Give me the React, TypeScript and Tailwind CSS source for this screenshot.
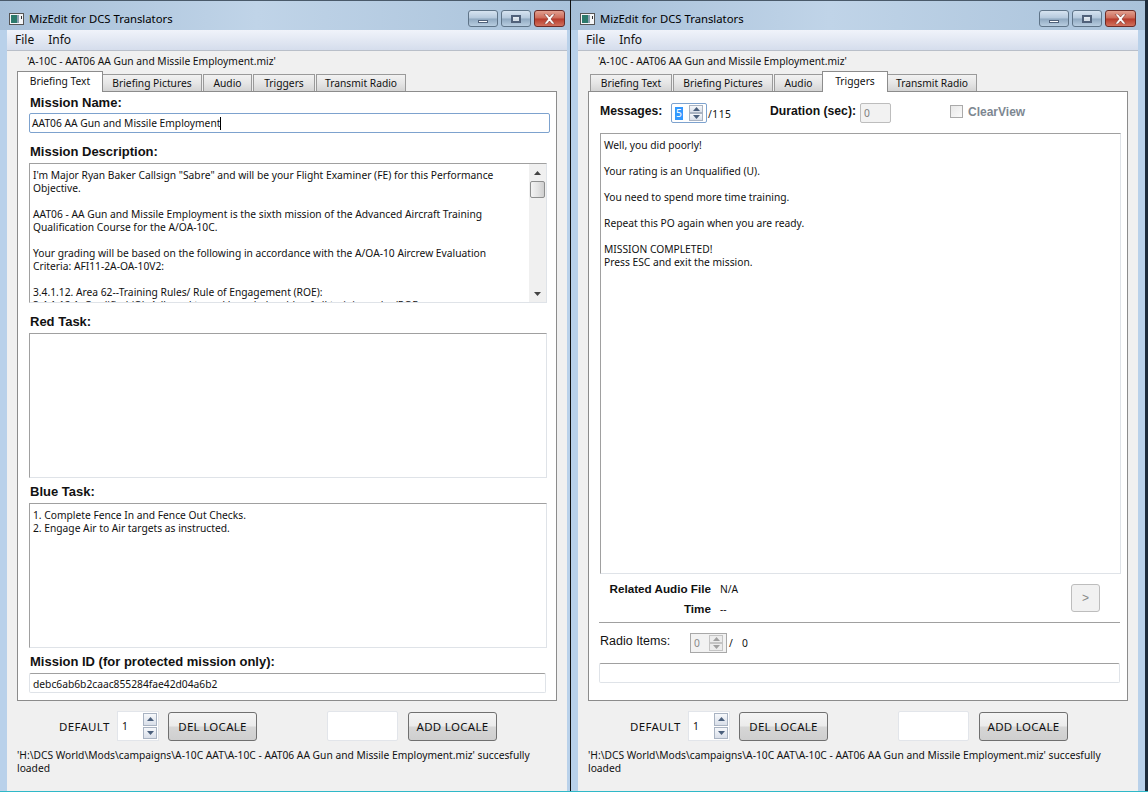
import type { ReactNode } from "react";

const bodyFont = "font-['Noto_Sans',sans-serif] text-[10.25px] leading-[13px] text-[#111]";
const capsFont = "font-['Noto_Sans',sans-serif] text-[11.5px] tracking-[0.3px] leading-[13px] text-[#111]";
const boldLabel = "font-['Liberation_Sans',sans-serif] font-bold text-[13px] leading-[15px] text-[#111] whitespace-nowrap";
const btnFace = "bg-[linear-gradient(#f4f4f4_0%,#ebebeb_48%,#d6d6d6_52%,#cfcfcf_100%)]";

const tabs = [
    { name: "Briefing Text", width: "w-[82px]", activeWidth: "w-[86px]" },
    { name: "Briefing Pictures", width: "w-[100px]", activeWidth: "w-[104px]" },
    { name: "Audio", width: "w-[49px]", activeWidth: "w-[53px]" },
    { name: "Triggers", width: "w-[62px]", activeWidth: "w-[66px]" },
    { name: "Transmit Radio", width: "w-[90px]", activeWidth: "w-[94px]" },
];

const description = [
    'I\'m Major Ryan Baker Callsign "Sabre" and will be your Flight Examiner (FE) for this Performance',
    "Objective.",
    "",
    "AAT06 - AA Gun and Missile Employment is the sixth mission of the Advanced Aircraft Training",
    "Qualification Course for the A/OA-10C.",
    "",
    "Your grading will be based on the following in accordance with the A/OA-10 Aircrew Evaluation",
    "Criteria: AFI11-2A-OA-10V2:",
    "",
    "3.4.1.12. Area 62--Training Rules/ Rule of Engagement (ROE):",
    "3.4.1.12.1. Qualified (Q). Adhered to and knowledgeable of all training rules/ROE.",
];

const triggerText = [
    "Well, you did poorly!",
    "",
    "Your rating is an Unqualified (U).",
    "",
    "You need to spend more time training.",
    "",
    "Repeat this PO again when you are ready.",
    "",
    "MISSION COMPLETED!",
    "Press ESC and exit the mission.",
];

const Lines = ({ lines }: { lines: string[] }) => (
    <>
        {lines.map((line, i) => (
            <div key={i} className="h-[13px] whitespace-nowrap">
                {line}
            </div>
        ))}
    </>
);

const Arrow = ({ up, color = "#4a5f7c" }: { up?: boolean; color?: string }) => (
    <svg width="7" height="4" viewBox="0 0 7 4">
        <path d={up ? "M3.5 0L7 4H0Z" : "M0 0H7L3.5 4Z"} fill={color} />
    </svg>
);

const SpinButtons = ({ disabled, compact }: { disabled?: boolean; compact?: boolean }) => (
    <div className={`flex flex-col ${compact ? "w-[14px] gap-0" : "w-[14px] gap-px"} shrink-0`}>
        {[true, false].map((up) => (
            <div
                key={String(up)}
                className={`flex-1 flex items-center justify-center border ${
                    disabled ? "border-[#c4c4c4] bg-[#ececec]" : "border-[#a9b3c2] bg-[linear-gradient(#f6f8fb,#d9dfe9)]"
                }`}
            >
                <Arrow up={up} color={disabled ? "#a0a0a0" : "#4a5f7c"} />
            </div>
        ))}
    </div>
);

const Field = ({ children, className }: { children?: ReactNode; className: string }) => (
    <div className={`border rounded-[2px] bg-white flex items-center ${bodyFont} ${className}`}>{children}</div>
);

const PushButton = ({ label }: { label: string }) => (
    <div
        className={`w-[89px] h-[29px] border border-[#707070] rounded-[3px] flex items-center justify-center pt-px ${btnFace} ${capsFont}`}
    >
        {label}
    </div>
);

const TitleButtons = () => (
    <div className="flex gap-[3px] pt-[9px]">
        <div className="w-[30px] h-[17px] rounded-[3px] border border-[#5f7488] flex items-center justify-center bg-[linear-gradient(#d6e3f0_0%,#b4c8dc_48%,#8fa8c0_52%,#b8cde0_100%)]">
            <div className="w-[10px] h-[3px] mt-[5px] bg-white border border-[#50617a]" />
        </div>
        <div className="w-[30px] h-[17px] rounded-[3px] border border-[#5f7488] flex items-center justify-center bg-[linear-gradient(#d6e3f0_0%,#b4c8dc_48%,#8fa8c0_52%,#b8cde0_100%)]">
            <div className="w-[10px] h-[8px] bg-white/60 border-2 border-[#50617a]" />
        </div>
        <div className="w-[31px] h-[17px] rounded-[3px] border border-[#6b2b26] flex items-center justify-center bg-[linear-gradient(#e2a08f_0%,#cc6a58_48%,#b63a2a_52%,#d2715d_100%)]">
            <svg width="13" height="10" viewBox="0 0 13 10">
                <path d="M1 0H4L6.5 3L9 0H12L8 5L12 10H9L6.5 7L4 10H1L5 5Z" fill="#fff" stroke="#7a3026" strokeWidth="0.6" />
            </svg>
        </div>
    </div>
);

const AppIcon = () => (
    <svg width="15" height="12" viewBox="0 0 15 12" className="shrink-0">
        <rect x="0.5" y="0.5" width="14" height="11" fill="#f4f6f8" stroke="#555" />
        <rect x="2" y="2" width="6" height="8" fill="#2c7a6c" />
        <rect x="8" y="2" width="2" height="8" fill="#8aa0b0" />
        <rect x="12" y="3" width="1" height="3" fill="#333" />
    </svg>
);

const TabBar = ({ active }: { active: number }) => (
    <div className="flex gap-px h-[20px] items-end relative z-10 pl-[2px]">
        {tabs.map((tab, i) =>
            i === active ? (
                <div
                    key={tab.name}
                    className={`${tab.activeWidth} h-[21px] -mx-[2px] -mb-px relative z-10 bg-white border border-b-0 border-[#8c8c8c] flex items-center justify-center pb-[2px] ${bodyFont}`}
                >
                    {tab.name}
                </div>
            ) : (
                <div
                    key={tab.name}
                    className={`${tab.width} h-[17px] border border-b-0 border-[#9a9a9a] bg-[linear-gradient(#f2f2f2,#e6e6e6_50%,#d4d4d4)] flex items-center justify-center ${bodyFont}`}
                >
                    {tab.name}
                </div>
            )
        )}
    </div>
);

const ScrollBar = () => (
    <div className="w-[17px] h-full shrink-0 bg-[#f0f0f0] flex flex-col items-center">
        <div className="h-[17px] flex items-center justify-center">
            <Arrow up color="#444" />
        </div>
        <div className="w-[15px] h-[17px] border border-[#8e8f8f] rounded-[2px] bg-[linear-gradient(90deg,#f3f3f3,#e4e4e4_50%,#cfcfcf)]" />
        <div className="flex-1" />
        <div className="h-[17px] flex items-center justify-center">
            <Arrow color="#444" />
        </div>
    </div>
);

const TextBox = ({ className, children }: { className: string; children?: ReactNode }) => (
    <div
        className={`border border-[#a0a0a0] border-r-[#dfe3e8] border-b-[#dfe3e8] bg-white overflow-hidden ${bodyFont} ${className}`}
    >
        {children}
    </div>
);

const BriefingPage = () => (
    <div className="pl-[11px] pt-[2px]">
        <div className={`${boldLabel} h-[19px] pl-px pt-px`}>Mission Name:</div>
        <div className="w-[521px] h-[20px] border border-[#7da2ce] rounded-[2px] bg-white pl-[2px] flex items-center">
            <span className={`${bodyFont} mt-px`}>AAT06 AA Gun and Missile Employment</span>
            <span className="w-px h-[13px] bg-black" />
        </div>
        <div className={`${boldLabel} h-[30px] pl-px pt-[11px]`}>Mission Description:</div>
        <TextBox className="w-[518px] h-[140px] flex">
            <div className="flex-1 overflow-hidden pl-[3px] pt-[5px]">
                <Lines lines={description} />
            </div>
            <ScrollBar />
        </TextBox>
        <div className={`${boldLabel} h-[30px] pl-px pt-[11px]`}>Red Task:</div>
        <TextBox className="w-[518px] h-[145px]" />
        <div className={`${boldLabel} h-[25px] pl-px pt-[6px]`}>Blue Task:</div>
        <TextBox className="w-[518px] h-[145px] pl-[3px] pt-[5px]">
            <Lines lines={["1. Complete Fence In and Fence Out Checks.", "2. Engage Air to Air targets as instructed."]} />
        </TextBox>
        <div className={`${boldLabel} h-[25px] pl-px pt-[6px]`}>Mission ID (for protected mission only):</div>
        <Field className="w-[517px] h-[20px] border-[#dfe3e8] border-t-[#a0a0a0] pl-[3px] pt-[2px]">
            debc6ab6b2caac855284fae42d04a6b2
        </Field>
    </div>
);

const TriggersPage = () => (
    <div className="pl-[11px]">
        <div className="h-[41px] flex items-center">
            <span className={`${boldLabel} text-[12.2px]! w-[71px] -mt-[2px]`}>Messages:</span>
            <div className="w-[36px] h-[20px] border border-[#7da2ce] rounded-[2px] bg-white flex items-center justify-between pr-[3px] mt-px">
                <span className={`${bodyFont} ml-[3px] px-px bg-[#3399ff] text-white!`}>5</span>
                <div className="h-[16px] flex">
                    <SpinButtons compact />
                </div>
            </div>
            <span className={`${bodyFont} ml-px w-[62px] tracking-[0.5px] mt-[4px]`}>/115</span>
            <span className={`${boldLabel} text-[12.2px]! w-[90px] -mt-[2px]`}>Duration (sec):</span>
            <Field className="w-[31px] h-[20px] border-[#bdbdbd] bg-[#f2f2f2]! pl-[3px] text-[#808080]! mt-px">0</Field>
            <div className="w-[13px] h-[13px] ml-[59px] border border-[#aaa] bg-[linear-gradient(135deg,#e8e8e8,#fafafa)] -mt-[2px]" />
            <span className="font-['Liberation_Sans',sans-serif] font-bold text-[12px] text-[#7d8791] ml-[5px] -mt-px">ClearView</span>
        </div>
        <TextBox className="w-[521px] h-[441px] pl-[3px] pt-[5px]">
            <Lines lines={triggerText} />
        </TextBox>
        <div className="w-[521px] h-[48px] flex">
            <div className="w-[111px] pt-[8px] flex flex-col gap-[7px] items-end">
                <span className={`${boldLabel} text-[11.7px]! leading-[13px]!`}>Related Audio File</span>
                <span className={`${boldLabel} text-[11.7px]! leading-[13px]!`}>Time</span>
            </div>
            <div className={`pl-[9px] pt-[9px] flex flex-col gap-[7px] ${bodyFont}`}>
                <span>N/A</span>
                <span>--</span>
            </div>
            <div className="ml-auto mr-[21px] mt-[10px] w-[29px] h-[28px] border border-[#bdbdbd] rounded-[3px] bg-[#f1f1f1] flex items-center justify-center text-[#888] font-['Liberation_Sans',sans-serif] text-[12px]">
                &gt;
            </div>
        </div>
        <div className="w-[521px] h-px bg-[#a0a0a0] -ml-px" />
        <div className="h-[40px] flex items-center">
            <span className={`${boldLabel} text-[12.5px]! font-normal! w-[90px] -mt-[3px]`}>Radio Items:</span>
            <div className="w-[37px] h-[20px] border border-[#a8a8a8] bg-[#f2f2f2] flex items-center justify-between pl-[3px] pr-[3px]">
                <span className={`${bodyFont} text-[#8a8a8a]!`}>0</span>
                <div className="h-[16px] flex">
                    <SpinButtons disabled compact />
                </div>
            </div>
            <span className={`${bodyFont} ml-[2px] w-[13px]`}>/</span>
            <span className={bodyFont}>0</span>
        </div>
        <Field className="w-[521px] h-[20px] -ml-px border-[#dfe3e8] border-t-[#a0a0a0]" />
    </div>
);

const Window = ({ page, active, width }: { page: ReactNode; active: number; width: string }) => (
    <div className={`h-[791px] flex flex-col shrink-0 bg-[#b9d1ea] pl-[7px] ${width}`}>
        <div className="h-[30px] -ml-[7px] bg-[linear-gradient(90deg,#a6bfd8,#c0d4e8_45%,#a9c2da)] border-t border-[#4a5a6a]">
            <div className="w-[565px] flex items-start justify-between">
                <div className="flex items-center pl-[9px] pt-[11px] gap-[5px]">
                    <AppIcon />
                    <span className="font-['Noto_Sans',sans-serif] text-[11.3px] leading-[14px] text-black whitespace-nowrap">MizEdit for DCS Translators</span>
                </div>
                <TitleButtons />
            </div>
        </div>
        <div className="w-[560px] h-[21px] bg-[linear-gradient(#f0f3fa,#d5ddec)] border-b border-[#b9bfc9] flex items-center pl-[8px] gap-[14px] font-['Noto_Sans',sans-serif] text-[12px] text-[#111]">
            <span>File</span>
            <span>Info</span>
        </div>
        <div className="flex-1 bg-[#f0f0f0] w-[560px] flex flex-col">
            <div className={`${bodyFont} h-[20px] pl-[20px] pt-[4px]`}>'A-10C - AAT06 AA Gun and Missile Employment.miz'</div>
            <div className="pl-[10px]">
                <TabBar active={active} />
                <div className="w-[540px] h-[610px] border border-[#8c8c8c] bg-white">{page}</div>
            </div>
            <div className="h-[30px] mt-[10px] flex items-center">
                <span className={`${capsFont} w-[110px] pl-[52px] pt-px shrink-0`}>DEFAULT</span>
                <div className="w-[42px] h-[30px] border border-[#e2e5ea] bg-white flex items-center justify-between pl-[4px] pr-[1px] shrink-0">
                    <span className={bodyFont}>1</span>
                    <div className="h-[26px] flex">
                        <SpinButtons />
                    </div>
                </div>
                <div className="ml-[9px] shrink-0">
                    <PushButton label="DEL LOCALE" />
                </div>
                <div className="ml-[70px] w-[71px] h-[30px] border border-[#e2e5ea] rounded-[2px] bg-white shrink-0" />
                <div className="ml-[10px] shrink-0">
                    <PushButton label="ADD LOCALE" />
                </div>
            </div>
            <div className={`${bodyFont} pl-[10px] mt-[8px]`}>
                <Lines lines={["'H:\\DCS World\\Mods\\campaigns\\A-10C AAT\\A-10C - AAT06 AA Gun and Missile Employment.miz' succesfully", "loaded"]} />
            </div>
        </div>
    </div>
);

export default function App() {
    return (
        <div className="w-[1148px] h-[792px] overflow-hidden bg-[#1d2b3a]">
            <div className="flex h-[791px]">
                <div className="w-[570px] shrink-0 overflow-hidden">
                    <Window page={<BriefingPage />} active={0} width="w-[571px]" />
                </div>
                <div className="w-px bg-[#111]" />
                <div className="w-[574px] shrink-0 overflow-hidden">
                    <Window page={<TriggersPage />} active={3} width="w-[574px]" />
                </div>
            </div>
            <div className="h-px bg-[#2fb8c8]" />
        </div>
    );
}
